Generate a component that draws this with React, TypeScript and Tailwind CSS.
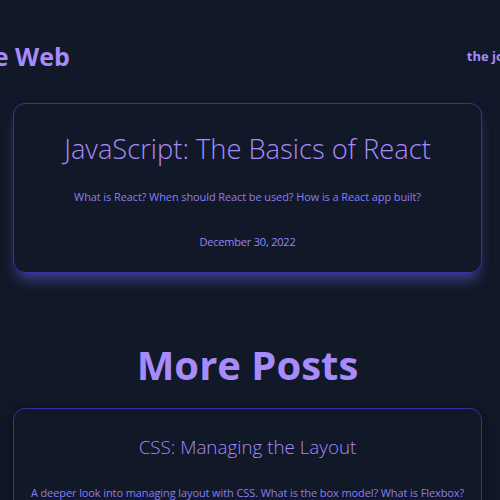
import React from "react";

export default function App() {
  return (
    <div
      className="min-h-screen w-[500px] overflow-hidden bg-[#111827]"
      style={{ fontFamily: '"Open Sans", "Noto Sans", sans-serif' }}
    >
      <header className="-ml-[150px] flex h-[103px] items-start gap-[397px] pt-[44px]">
        <div className="shrink-0 whitespace-nowrap text-[25px] font-bold leading-none text-[#a78bfa]">Learning the Web</div>
        <nav className="shrink-0 whitespace-nowrap pt-[6px] text-[13px] font-bold leading-none text-[#a78bfa]">the journey</nav>
      </header>

      <main className="ml-[13px] w-[469px]">
        <article className="flex h-[170px] flex-col items-center rounded-xl border border-[#4338ca]/80 pt-[31px] shadow-[0_10px_14px_-4px_rgba(99,102,241,0.55)]">
          <h2 className="text-[27.3px] font-light leading-none text-[#a78bfa]">JavaScript: The Basics of React</h2>
          <p className="mt-[29px] text-[11px] leading-none tracking-[-0.1px] text-[#8b7cf6]">
            What is React? When should React be used? How is a React app built?
          </p>
          <p className="mt-[34px] text-[11px] leading-none tracking-[-0.2px] text-[#9d86f7]">December 30, 2022</p>
        </article>

        <h1 className="mt-[72px] text-center text-[40px] font-bold leading-none text-[#a78bfa]">More Posts</h1>

        <article className="mt-[23px] flex h-[140px] flex-col items-center rounded-xl border border-[#3730a3] pt-[29px] shadow-[0_0_12px_rgba(0,0,0,0.35)]">
          <h2 className="text-[18.8px] font-light leading-none text-[#a78bfa]">CSS: Managing the Layout</h2>
          <p className="mt-[30px] text-[11px] leading-none tracking-[-0.1px] text-[#8b7cf6]">
            A deeper look into managing layout with CSS. What is the box model? What is Flexbox?
          </p>
        </article>
      </main>
    </div>
  );
}
